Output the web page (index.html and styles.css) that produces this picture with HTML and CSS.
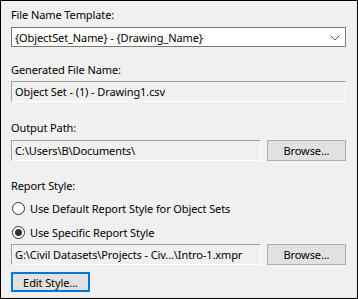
FILE: index.html
```html
<!DOCTYPE html>
<html lang="en">
<head>
  <meta charset="UTF-8" />
  <title>Report Settings</title>
  <link rel="stylesheet" href="styles.css">
</head>
<body>
  <div class="panel">
    <div class="label first">File Name Template:</div>
    <div class="combo">
      <span>{ObjectSet_Name} - {Drawing_Name}</span>
      <svg class="arrow" width="10" height="6" viewBox="0 0 10 6">
        <path d="M0.5 0.5 L5 5 L9.5 0.5" fill="none" stroke="#606060" stroke-width="1" />
      </svg>
    </div>

    <div class="label gen">Generated File Name:</div>
    <div class="textbox wide">Object Set - (1) - Drawing1.csv</div>

    <div class="label out">Output Path:</div>
    <div class="row">
      <div class="textbox">C:\Users\B\Documents\</div>
      <button class="btn">Browse...</button>
    </div>

    <div class="label style">Report Style:</div>
    <label class="radio first-radio">
      <span class="dot"></span>
      Use Default Report Style for Object Sets
    </label>
    <label class="radio checked">
      <span class="dot"></span>
      Use Specific Report Style
    </label>
    <div class="row style-row">
      <div class="textbox">G:\Civil Datasets\Projects - Civ...\Intro-1.xmpr</div>
      <button class="btn">Browse...</button>
    </div>

    <button class="btn edit">Edit Style...</button>
  </div>
</body>
</html>
```

FILE: styles.css
```css
body {
  margin: 0;
  font-family: "Noto Sans", "Open Sans", sans-serif;
  font-size: 11px;
  letter-spacing: -0.1px;
  color: #000;
}

.panel {
  width: 358px;
  height: 299px;
  box-sizing: border-box;
  border: 1px solid #000;
  background: #f0f0f0;
  padding: 0 11px 0 10px;
  display: flex;
  flex-direction: column;
  align-items: flex-start;
}

.label {
  height: 16px;
  line-height: 16px;
}

.label.first { margin-top: 6px; }
.label.gen { margin-top: 15px; }
.label.out { margin-top: 18px; }
.label.style { margin-top: 17px; }

.combo {
  margin-top: 4px;
  width: 335px;
  height: 20px;
  box-sizing: border-box;
  border: 1px solid #7a7a7a;
  background: #fff;
  display: flex;
  align-items: center;
  justify-content: space-between;
  padding: 0 5px 0 3px;
}

.arrow {
  margin-top: 1px;
}

.textbox {
  height: 21px;
  box-sizing: border-box;
  border-top: 1px solid #a0a0a0;
  border-left: 1px solid #a0a0a0;
  border-right: 1px solid #fff;
  border-bottom: 1px solid #fff;
  background: #f0f0f0;
  padding: 0 3px;
  line-height: 19px;
  white-space: nowrap;
  overflow: hidden;
  width: 250px;
}

.textbox.wide {
  margin-top: 3px;
  width: 335px;
}

.row {
  margin-top: 4px;
  width: 335px;
  display: flex;
  justify-content: space-between;
}

.style-row {
  margin-top: 2px;
}

.btn {
  font: inherit;
  letter-spacing: inherit;
  color: #000;
  width: 79px;
  height: 21px;
  box-sizing: border-box;
  border: 1px solid #adadad;
  background: #e1e1e1;
  padding: 0;
  margin: 0;
}

.btn.edit {
  margin-top: 7px;
  height: 20px;
  border: 2px solid #0078d7;
}

.radio {
  height: 20px;
  display: flex;
  align-items: center;
  gap: 5px;
  margin-top: 4px;
  padding-left: 1px;
}

.dot {
  width: 13px;
  height: 13px;
  box-sizing: border-box;
  border: 1px solid #333;
  border-radius: 50%;
  background: #fff;
  display: flex;
  align-items: center;
  justify-content: center;
}

.radio.checked .dot::after {
  content: "";
  width: 7px;
  height: 7px;
  border-radius: 50%;
  background: #333;
}
```
